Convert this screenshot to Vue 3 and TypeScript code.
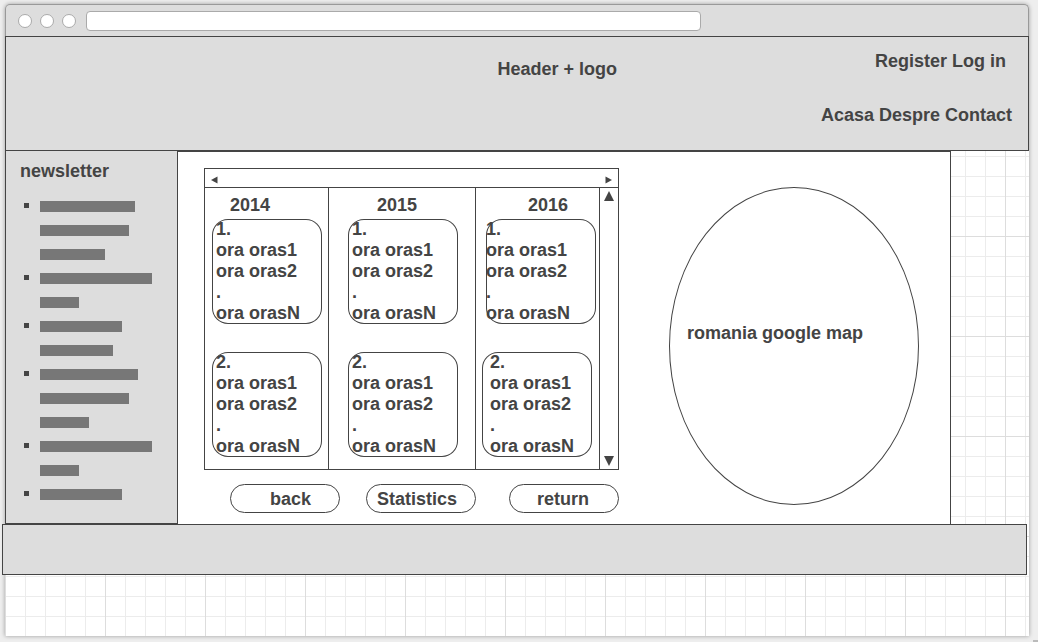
<script setup lang="ts">
interface Slot {
  title: string
  variant: string
}

const years: { label: string; variant: string }[] = [
  { label: '2014', variant: 'first' },
  { label: '2015', variant: 'second' },
  { label: '2016', variant: 'third' },
]

const rows: Slot[][] = [
  [
    { title: '1.', variant: 'first' },
    { title: '1.', variant: 'second' },
    { title: '1.', variant: 'third flush' },
  ],
  [
    { title: '2.', variant: 'first' },
    { title: '2.', variant: 'second' },
    { title: '2.', variant: 'third roomy' },
  ],
]

const entries: string[] = ['ora oras1', 'ora oras2', '.', 'ora orasN']

// Line widths of each newsletter item, in pixels
const news: number[][] = [[95, 89, 65], [112, 39], [82, 73], [98, 89, 49], [112, 39], [82]]
</script>

<template>
  <div class="page">
    <div class="window">
      <div class="chrome">
        <span v-for="n in 3" :key="n" class="dot"></span>
        <input class="address" type="text" aria-label="Address" />
      </div>

      <div class="canvas">
        <header class="header">
          <div class="logo">Header + logo</div>
          <div class="menus">
            <nav class="account" aria-label="Account">
              <a href="#register">Register</a> <a href="#login">Log in</a>
            </nav>
            <nav class="site" aria-label="Site">
              <a href="#acasa">Acasa</a> <a href="#despre">Despre</a> <a href="#contact">Contact</a>
            </nav>
          </div>
        </header>

        <div class="body">
          <aside class="sidebar">
            <h2>newsletter</h2>
            <ul>
              <li v-for="(item, i) in news" :key="i">
                <span v-for="(w, j) in item" :key="j" class="line" :style="{ width: w + 'px' }"></span>
              </li>
            </ul>
          </aside>

          <main class="main">
            <section class="planner">
              <div class="frame">
                <div class="hscroll">
                  <button type="button" aria-label="Scroll left">
                    <svg width="7" height="8" viewBox="0 0 7 8"><path d="M6.5 0.5v7L0 4z" /></svg>
                  </button>
                  <button type="button" aria-label="Scroll right">
                    <svg width="7" height="8" viewBox="0 0 7 8"><path d="M0.5 0.5v7L7 4z" /></svg>
                  </button>
                </div>
                <div class="viewport">
                  <table>
                    <colgroup>
                      <col class="side" />
                      <col />
                      <col class="side" />
                    </colgroup>
                    <thead>
                      <tr>
                        <th v-for="y in years" :key="y.label" :class="y.variant" scope="col">{{ y.label }}</th>
                      </tr>
                    </thead>
                    <tbody>
                      <tr v-for="(row, r) in rows" :key="r">
                        <td v-for="(slot, c) in row" :key="c" :class="slot.variant">
                          <div class="slot">
                            <div>{{ slot.title }}</div>
                            <div v-for="e in entries" :key="e">{{ e }}</div>
                          </div>
                        </td>
                      </tr>
                    </tbody>
                  </table>
                  <div class="vscroll">
                    <button type="button" aria-label="Scroll up">
                      <svg width="10" height="10" viewBox="0 0 10 10"><path d="M5 0l5 10H0z" /></svg>
                    </button>
                    <button type="button" aria-label="Scroll down">
                      <svg width="10" height="10" viewBox="0 0 10 10"><path d="M0 0h10L5 10z" /></svg>
                    </button>
                  </div>
                </div>
              </div>
              <div class="actions">
                <button type="button" class="back">back</button>
                <button type="button" class="stats">Statistics</button>
                <button type="button" class="return">return</button>
              </div>
            </section>
            <section class="map">romania google map</section>
          </main>
        </div>

        <footer class="footer"></footer>
      </div>
    </div>
    <span class="grip"></span>
  </div>
</template>

<style>
body {
  margin: 0;
  background: #eee;
}
</style>

<style scoped>
* {
  box-sizing: border-box;
}

.page {
  position: relative;
  display: flex;
  flex-direction: column;
  min-height: 100vh;
  padding: 4px 9px 6px 5px;
  font: bold 18px/21px "Liberation Sans", Arial, sans-serif;
  color: #444;
}

.window {
  flex: 1;
  display: flex;
  flex-direction: column;
  border-radius: 5px 5px 0 0;
  box-shadow: 0 0 4px rgba(0, 0, 0, 0.35);
}

.chrome {
  display: flex;
  align-items: center;
  gap: 8px;
  height: 32px;
  padding: 1px 12px 0;
  background: #ddd;
  border: 1px solid #999;
  border-bottom: 0;
  border-radius: 5px 5px 0 0;
}

.dot {
  width: 14px;
  height: 14px;
  background: #fff;
  border: 1px solid #aaa;
  border-radius: 50%;
}

.address {
  flex: 0 1 615px;
  min-width: 0;
  height: 20px;
  margin-left: 2px;
  padding: 0 6px;
  background: #fff;
  border: 1px solid #aaa;
  border-radius: 4px;
  font: inherit;
  font-size: 13px;
}

.canvas {
  flex: 1;
  background-color: #fff;
  background-image:
    linear-gradient(to right, #ddd 1px, transparent 1px),
    linear-gradient(to bottom, #ddd 1px, transparent 1px),
    linear-gradient(to right, #ececec 1px, transparent 1px),
    linear-gradient(to bottom, #ececec 1px, transparent 1px);
  background-size: 100px 100px, 100px 100px, 20px 20px, 20px 20px;
}

.header {
  display: flex;
  justify-content: space-between;
  padding: 14px 16px 24px 48%;
  background: #ddd;
  border: 1px solid #444;
}

.logo {
  padding-top: 8px;
}

.menus {
  display: flex;
  flex-direction: column;
  align-items: flex-end;
  gap: 33px;
}

.account {
  margin-right: 6px;
}

a {
  color: inherit;
  text-decoration: none;
}

.body {
  display: flex;
  padding-right: 78px;
}

.sidebar {
  flex: 0 0 172px;
  padding: 10px 14px 0;
  background: #ddd;
  border-left: 1px solid #444;
  border-bottom: 1px solid #444;
}

h2 {
  margin: 0;
  font: inherit;
}

ul {
  margin: 13px 0 0;
  padding: 0;
  list-style: none;
}

li {
  position: relative;
  padding-left: 20px;
}

li::before {
  content: "";
  position: absolute;
  left: 4px;
  top: 8px;
  width: 5px;
  height: 5px;
  background: #444;
}

.line {
  display: block;
  height: 24px;
  padding: 6px 0 7px;
  background: #777 content-box;
}

.main {
  flex: 1;
  display: grid;
  grid-template-columns: 415fr 250fr;
  column-gap: 50px;
  padding: 16px 31px 11px 26px;
  background: #fff;
  border: 1px solid #444;
  border-bottom: 0;
}

.frame {
  border: 1px solid #444;
}

button {
  color: inherit;
  background: none;
  border: 0;
  font: inherit;
}

svg {
  display: block;
  fill: #444;
}

.hscroll {
  display: flex;
  justify-content: space-between;
  padding: 7px 6px 3px;
  border-bottom: 1px solid #444;
}

.hscroll button,
.vscroll button {
  padding: 0;
}

.viewport {
  display: flex;
}

table {
  flex: 1;
  table-layout: fixed;
  border-collapse: separate;
  border-spacing: 0;
}

.side {
  width: 124px;
}

th,
td {
  padding: 0;
  border-right: 1px solid #444;
  text-align: left;
  vertical-align: top;
}

th {
  padding: 7px 0 3px;
}

th.first {
  padding-left: 25px;
}

th.second {
  padding-left: 48px;
}

th.third {
  padding-left: 52px;
}

td {
  padding-bottom: 28px;
}

tr:last-child td {
  padding-bottom: 12px;
}

td.first {
  padding-left: 7px;
}

td.second {
  padding-left: 19px;
}

td.flush {
  padding-left: 10px;
}

td.roomy {
  padding-left: 6px;
}

.slot {
  width: 110px;
  padding-left: 4px;
  border-radius: 16px;
  box-shadow: inset 0 0 0 1px #444;
}

.flush .slot {
  padding-left: 0;
}

.roomy .slot {
  padding-left: 8px;
}

.vscroll {
  flex: 0 0 18px;
  display: flex;
  flex-direction: column;
  align-items: center;
  justify-content: space-between;
  padding: 3px 0;
}

.actions {
  display: flex;
  margin: 14px 0 0 26px;
}

.actions button {
  width: 110px;
  padding: 4px 0 2px;
  border: 1px solid #444;
  border-radius: 15px;
  text-align: left;
}

.actions .back {
  padding-left: 39px;
}

.actions .stats {
  margin-left: 26px;
  padding-left: 10px;
}

.actions .return {
  margin-left: auto;
  padding-left: 27px;
}

.map {
  margin: 19px 0 8px;
  padding: 135px 17px 0;
  border: 1px solid #444;
  border-radius: 50%;
}

.footer {
  height: 51px;
  margin: 0 2px 0 -3px;
  background: #ddd;
  border: 1px solid #444;
}

.grip {
  position: absolute;
  right: 0;
  bottom: 0;
  width: 5px;
  height: 2px;
  background: #bbb;
}
</style>
